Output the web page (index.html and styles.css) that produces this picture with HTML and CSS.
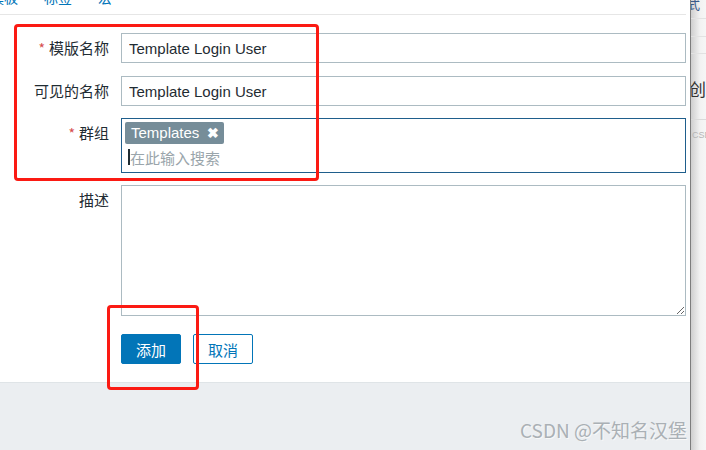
FILE: index.html
```html
<!DOCTYPE html>
<html lang="zh">
<head>
<meta charset="utf-8">
<link rel="stylesheet" href="styles.css">
</head>
<body>
<div class="screen">
  <div class="main">
    <div class="panel">
      <div class="tabs">
        <span class="tab tab-first">模板</span>
        <span class="tab">标签</span>
        <span class="tab">宏</span>
      </div>
      <form class="form">
        <div class="row first">
          <label class="label"><span class="req">*</span>模版名称</label>
          <input class="input" type="text" value="Template Login User">
        </div>
        <div class="row">
          <label class="label">可见的名称</label>
          <input class="input" type="text" value="Template Login User">
        </div>
        <div class="row">
          <label class="label"><span class="req">*</span>群组</label>
          <div class="multi">
            <div class="tags"><span class="tag">Templates <span class="x">✖</span></span></div>
            <div class="search"><span class="caret"></span><span class="ph">在此输入搜索</span></div>
          </div>
        </div>
        <div class="row">
          <label class="label">描述</label>
          <textarea class="textarea"></textarea>
        </div>
        <div class="buttons">
          <button type="button" class="btn primary">添加</button>
          <button type="button" class="btn secondary">取消</button>
        </div>
      </form>
    </div>
    <div class="foot"></div>
  </div>
  <div class="divider"></div>
  <div class="side">
    <div class="side-top">式</div>
    <div class="side-line"></div>
    <div class="side-line s2"></div>
    <div class="side-line s3"></div>
    <div class="side-big">创作</div>
    <div class="side-sep"></div>
    <div class="side-small">CSDN</div>
  </div>
</div>
<div class="mark mark1"></div>
<div class="mark mark2"></div>
<div class="watermark">CSDN @不知名汉堡</div>
</body>
</html>
```

FILE: styles.css
```css
* { box-sizing: border-box; }
html, body { margin: 0; padding: 0; }
body {
  width: 706px;
  height: 450px;
  overflow: hidden;
  position: relative;
  font-family: "Liberation Sans", Arial, "Noto Sans CJK SC", sans-serif;
  color: #1f2c33;
  background: #ebeef1;
}
.screen { display: flex; height: 450px; }
.main { width: 690px; display: flex; flex-direction: column; background: #ebeef1; }
.panel { background: #fff; border-bottom: 1px solid #dfe4e7; padding-right: 4px; height: 383px; }
.tabs {
  height: 15px;
  border-bottom: 1px solid #e6e6e6;
  overflow: hidden;
  display: flex;
  gap: 26px;
  font-family: "Noto Sans CJK SC", sans-serif;
  font-size: 14px;
  line-height: 14px;
  color: #0275b8;
}
.tab { margin-top: -10px; }
.tab-first { margin-left: -10px; }
.form { padding-top: 18px; display: flex; flex-direction: column; gap: 12px; }
.row { display: flex; gap: 12px; align-items: flex-start; }
.row.first { margin-bottom: 1px; }
.label {
  width: 109px;
  text-align: right;
  font-family: "Noto Sans CJK SC", sans-serif;
  font-size: 15px;
  line-height: 29px;
  height: 29px;
  color: #1f2c33;
}
.req { color: #d64e4e; margin-right: 4px; font-size: 14px; }
.input {
  width: 565px;
  height: 30px;
  border: 1px solid #acbbc2;
  border-radius: 0;
  padding: 0 7px;
  font-family: "Liberation Sans", Arial, sans-serif;
  font-size: 15px;
  color: #1f2c33;
  outline: none;
}
.multi {
  width: 565px;
  height: 55px;
  border: 1px solid #1f5e8c;
  padding: 3px 3px 0 3px;
}
.tags { height: 22px; }
.tag {
  display: inline-flex;
  align-items: center;
  height: 22px;
  padding: 0 5px 0 6px;
  background: #768d99;
  color: #fff;
  border-radius: 2px;
  font-size: 15px;
  line-height: 22px;
}
.x { margin-left: 8px; font-size: 14px; font-weight: bold; }
.search { display: flex; align-items: center; height: 26px; padding-left: 3px; }
.caret { width: 2px; height: 16px; background: #1f2c33; }
.ph { font-family: "Noto Sans CJK SC", sans-serif; font-size: 15px; color: #9aa5ab; }
.textarea {
  display: block;
  width: 565px;
  height: 131px;
  border: 1px solid #acbbc2;
  border-radius: 0;
  resize: both;
  outline: none;
  margin: 0;
}
.buttons { display: flex; gap: 12px; padding-left: 121px; margin-top: 6px; }
.btn {
  width: 60px;
  height: 30px;
  border-radius: 2px;
  font-family: "Noto Sans CJK SC", sans-serif;
  font-size: 15px;
  padding: 0;
  cursor: pointer;
}
.primary { background: #0275b8; border: 1px solid #0275b8; color: #fff; }
.secondary { background: #fff; border: 1px solid #0275b8; color: #0275b8; }
.foot { flex: 1; }
.divider { width: 1px; background: #7d7d7d; }
.side {
  flex: 1;
  background: linear-gradient(to right, #cfcfcf, #f2f2f2 60%, #f6f6f6);
  font-family: "Noto Sans CJK SC", sans-serif;
  overflow: hidden;
  display: flex;
  flex-direction: column;
}
.side-top { font-size: 13px; line-height: 13px; margin-top: -3px; color: #3a5a8a; margin-left: -4px; }
.side-line { height: 1px; background: #e2e2e2; margin-top: 8px; }
.side-line.s2 { margin-top: 17px; }
.side-line.s3 { margin-top: 16px; }
.side-big { font-size: 17px; line-height: 20px; margin-top: 25px; color: #333; white-space: nowrap; margin-left: -2px; }
.side-sep { height: 1px; background: #dadada; margin-top: 20px; }
.side-small { font-family: "Liberation Sans", sans-serif; font-size: 9px; color: #b5b5b5; margin-top: 10px; margin-left: 1px; }
.mark {
  position: absolute;
  border: 3px solid #fb1a13;
  border-radius: 4px;
}
.mark1 { left: 14px; top: 24px; width: 305px; height: 157px; }
.mark2 { left: 107px; top: 305px; width: 92px; height: 85px; }
.watermark {
  position: absolute;
  left: 520px;
  top: 416px;
  font-family: "Noto Sans CJK SC", sans-serif;
  font-size: 19px;
  color: #aab0b5;
  text-shadow: 1px 1px 0 #f8f8f8;
  white-space: nowrap;
}
```
